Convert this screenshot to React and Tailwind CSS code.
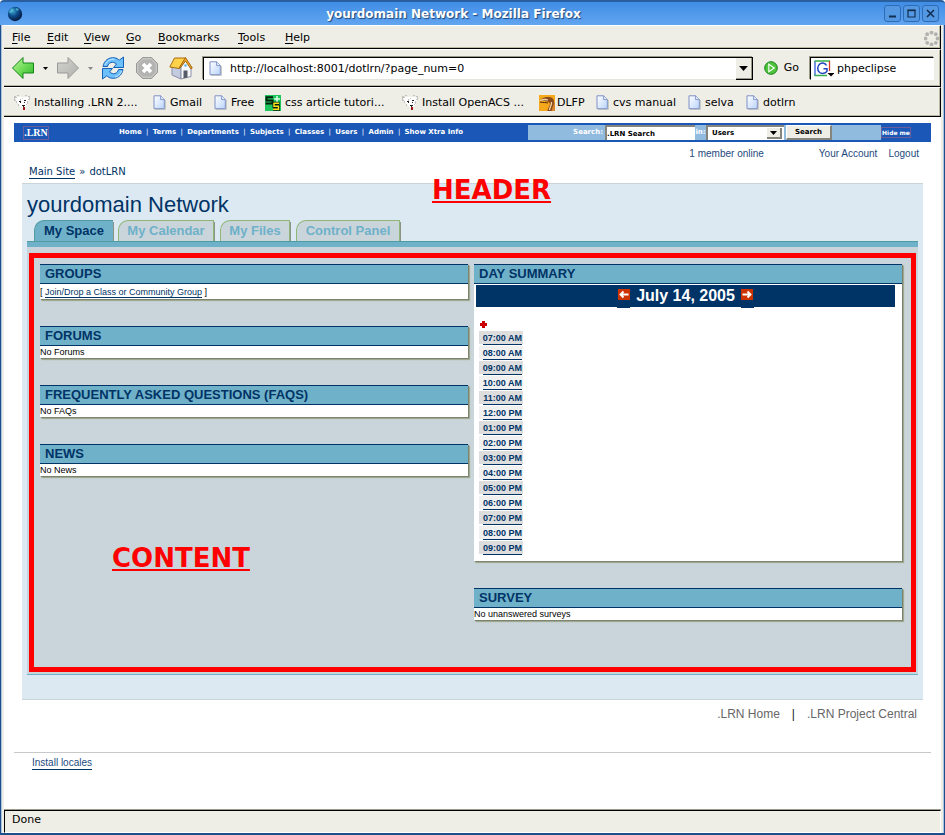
import React from "react";

const sans = "font-['Liberation_Sans',Arial,sans-serif]";
const ui = "font-['DejaVu_Sans',Verdana,sans-serif]";
const bar = "border-t border-r border-b border-t-white border-r-black border-b-black shadow-[inset_-1px_-1px_0_#b9b9a3]";

const menus = [
  { label: "File", width: "w-[35px]" },
  { label: "Edit", width: "w-[37px]" },
  { label: "View", width: "w-[42px]" },
  { label: "Go", width: "w-8" },
  { label: "Bookmarks", width: "w-20" },
  { label: "Tools", width: "w-[47px]" },
  { label: "Help", width: "w-9" },
];

const siteLinks = ["Home", "Terms", "Departments", "Subjects", "Classes", "Users", "Admin", "Show Xtra Info"];

const hours = [
  "07:00 AM", "08:00 AM", "09:00 AM", "10:00 AM", "11:00 AM",
  "12:00 PM", "01:00 PM", "02:00 PM", "03:00 PM", "04:00 PM",
  "05:00 PM", "06:00 PM", "07:00 PM", "08:00 PM", "09:00 PM",
];

function PageIcon() {
  return (
    <svg width="13" height="15" viewBox="0 0 13 15" className="shrink-0" aria-hidden="true">
      <defs>
        <linearGradient id="sheet" x1="0" y1="0" x2="1" y2="1">
          <stop offset="0" stopColor="#ffffff" />
          <stop offset="1" stopColor="#b9d4fb" />
        </linearGradient>
      </defs>
      <path d="M2 14.5h10.5V5" fill="none" stroke="#c9c9c4" />
      <path d="M1 .8h6.8l3.5 3.6v9.3H1z" fill="url(#sheet)" stroke="#7f90c4" />
      <path d="M7.6.8v3.8h3.7" fill="#e3edfd" stroke="#7f90c4" strokeWidth=".9" />
    </svg>
  );
}

function GnuIcon() {
  return (
    <svg width="16" height="16" viewBox="0 0 16 16" className="shrink-0" shapeRendering="crispEdges" aria-hidden="true">
      <path d="M3 2h10l2 2-1 5-2 2-1 2H8l-2-3-3-2-1-4z" fill="#fff" />
      <path d="M0 1h2v1h1v1H1v2h1v1H0zM3 0h2v1H3zM14 1h2v4h-2V4h1V2h-1zM11 0h2v1h-2zM2 6h1v2H2zM13 6h1v3h-1zM4 9h1v2H4zM12 9h1v1h-1zM6 4h1v2H6zM8 3h1v1H8z" fill="#c2c2c2" />
      <path d="M5 6h2v1H5zM10 5h2v1h-2zM6 7h1v1H6zM10 7h1v1h-1zM8 10h3v1H8zM9 11h1v1H9z" fill="#222" />
      <path d="M9 12h2v3H9z" fill="#a01818" />
    </svg>
  );
}

function CssIcon() {
  return (
    <svg width="16" height="16" viewBox="0 0 16 16" className="shrink-0" aria-hidden="true">
      <path d="M0 0h16v16H0z" fill="#1fc45a" />
      <path d="M12 1v6M9 4h6" stroke="#d8ffe4" strokeWidth="1.6" />
      <path d="M8 2.200H1.500v3.200h6v3.200H.5" fill="none" stroke="#04230f" strokeWidth="2" />
      <path d="M14.500 8.300H9v3h4.500v3H8" fill="none" stroke="#04230f" strokeWidth="3" />
      <path d="M14 8.300H9v3h4.500v3H8" fill="none" stroke="#ffe21a" strokeWidth="1.400" />
    </svg>
  );
}

function DlfpIcon() {
  return (
    <svg width="16" height="16" viewBox="0 0 16 16" className="shrink-0" aria-hidden="true">
      <path d="M0 0h16v16H0z" fill="#f5a81c" />
      <path d="M11 8h5v8H8z" fill="#d9852c" />
      <path d="M1 5.500C3 3 6 1.500 10 2c4 .500 5.500 3 5 6-.3 2.500-2 4-2.500 8H8.500c.5-3 3-5 2.500-7.500C10 6 5 6 1 5.500z" fill="#8a4a1c" />
      <path d="M1 5.500c3-1 6-1.300 8-.500M12.500 7c.5 3-1.500 4-2 8" stroke="#f0d6a4" strokeWidth="1.300" fill="none" />
      <path d="M1 7c3 .500 6 .500 8 1" stroke="#4a2008" fill="none" />
    </svg>
  );
}

const bookmarks = [
  { label: "Installing .LRN 2....", icon: <GnuIcon />, width: "w-[139px]", gap: "gap-1" },
  { label: "Gmail", icon: <PageIcon />, width: "w-[61px]", gap: "gap-1" },
  { label: "Free", icon: <PageIcon />, width: "w-[51px]", gap: "gap-1" },
  { label: "css article tutori...", icon: <CssIcon />, width: "w-[137px]", gap: "gap-1" },
  { label: "Install OpenACS ...", icon: <GnuIcon />, width: "w-[137px]", gap: "gap-1" },
  { label: "DLFP", icon: <DlfpIcon />, width: "w-[57px]", gap: "gap-0.5" },
  { label: "cvs manual", icon: <PageIcon />, width: "w-[92px]", gap: "gap-1" },
  { label: "selva", icon: <PageIcon />, width: "w-[58px]", gap: "gap-1" },
  { label: "dotlrn", icon: <PageIcon />, width: "w-[60px]", gap: "gap-1" },
];

function Caret({ className }) {
  return (
    <svg width="7" height="4" viewBox="0 0 7 4" className={className} aria-hidden="true">
      <path d="M0 0h7L3.5 4z" fill="currentColor" />
    </svg>
  );
}

function ArrowIcon({ forward }) {
  return (
    <svg width="24" height="24" viewBox="0 0 24 24" aria-hidden="true">
      <defs>
        <linearGradient id="go-green" x1="0" y1="0" x2="1" y2="1">
          <stop offset="0" stopColor="#c4f5a0" />
          <stop offset=".5" stopColor="#6fdc58" />
          <stop offset="1" stopColor="#2fb52a" />
        </linearGradient>
        <linearGradient id="go-grey" x1="0" y1="0" x2="1" y2="1">
          <stop offset="0" stopColor="#d3d3d0" />
          <stop offset="1" stopColor="#b0b0ad" />
        </linearGradient>
      </defs>
      <path
        d={forward ? "M22.500 12 12 1.500V7H1.500v10H12v5.500z" : "M1.500 12 12 1.500V7h10.500v10H12v5.500z"}
        fill={forward ? "url(#go-grey)" : "url(#go-green)"}
        stroke={forward ? "#999" : "#14861a"}
        strokeLinejoin="round"
      />
    </svg>
  );
}

function ReloadIcon() {
  return (
    <svg width="24" height="24" viewBox="0 0 24 24" aria-hidden="true">
      <g fill="#6cc0fb" stroke="#1560b8" strokeLinejoin="round">
        <path d="M2 10.500C3 4.500 8 1 13.500 1.800c2 .3 3.500 1.200 4.700 2.400L22.500 1v10.500H12.500L15.500 8C12 5 7.500 6 6.500 10.500z" />
        <path d="M22 13.500c-1 6-6 9.500-11.500 8.700-2-.3-3.500-1.200-4.700-2.400L1.500 23V12.500h10L8.500 16c3.500 3 8 2 9-2.500z" />
      </g>
      <path d="M4 9c1.500-4 5.500-6.300 9.500-5.800M14 21c3-.5 5.500-2.500 6.500-6" stroke="#c9eaff" fill="none" />
    </svg>
  );
}

function StopIcon() {
  return (
    <svg width="24" height="24" viewBox="0 0 24 24" aria-hidden="true">
      <path d="M7.500 1.500h9l6 6v9l-6 6h-9l-6-6v-9z" fill="#b3b3b1" stroke="#999" />
      <path d="M7.800 2.800h8.400l5 5v8.400l-5 5H7.800l-5-5V7.800z" fill="none" stroke="#cfcfcd" />
      <path d="m8 8 8 8m0-8-8 8" stroke="#fff" strokeWidth="3.600" />
    </svg>
  );
}

function HomeIcon() {
  return (
    <svg width="24" height="24" viewBox="0 0 24 24" aria-hidden="true">
      <path d="M3 11v8l9 4V10z" fill="#c3cbe0" stroke="#8a8fa8" />
      <path d="M12 23V10l5-5 5 7v8.500z" fill="#f6f7fb" stroke="#8a8fa8" />
      <path d="M14.500 22.300v-7.800h4v6.900z" fill="#555a68" />
      <path d="M5.500 2h11L10 12.500.8 11z" fill="#ffd24a" stroke="#a86a10" strokeLinejoin="round" />
      <path d="M16.500 1.500 23.300 12 22 13l-5.500-8L12 11l-2 1.500z" fill="#f3a82a" stroke="#a86a10" strokeLinejoin="round" />
      <circle cx="16.500" cy="9.500" r="1.300" fill="#5fb6ee" />
    </svg>
  );
}

function TitleBar() {
  const box = "flex size-[17px] items-center justify-center rounded-[3px] border border-[#2c6cb5] bg-[#5498e4] text-[#122f52]";
  return (
    <header className="flex h-[25px] items-center rounded-t border-t-2 border-[#2a5f9e] bg-linear-to-b from-[#3f8de6] to-[#62a5f0] pr-1.5 pl-[7px]">
      <svg width="16" height="16" viewBox="0 0 16 16" aria-hidden="true">
        <defs>
          <radialGradient id="globe" cx=".35" cy=".3" r=".8">
            <stop offset="0" stopColor="#3fa6cf" />
            <stop offset=".45" stopColor="#0c4a8a" />
            <stop offset="1" stopColor="#02102e" />
          </radialGradient>
        </defs>
        <circle cx="8" cy="8" r="7.200" fill="url(#globe)" />
        <path d="M4 3c2-1 3 0 2 2S3 8 2 6zM9 2l3 1-1 2-2-1z" fill="#56bfd8" opacity=".75" />
      </svg>
      <h1 className={`${ui} flex-1 text-center text-[12px] font-bold text-white [text-shadow:1px_1px_1px_#1d4478]`}>
        yourdomain Network - Mozilla Firefox
      </h1>
      <div className="flex gap-0.5">
        <button aria-label="Minimize" className={box}>
          <svg width="9" height="9" viewBox="0 0 9 9"><path d="M1 7.500h7" stroke="currentColor" strokeWidth="2" /></svg>
        </button>
        <button aria-label="Maximize" className={box}>
          <svg width="9" height="9" viewBox="0 0 9 9"><path d="M1 1.500h7v6.500H1z" fill="none" stroke="currentColor" strokeWidth="1.200" /><path d="M.5 1.300h8" stroke="currentColor" strokeWidth="1.800" /></svg>
        </button>
        <button aria-label="Close" className={box}>
          <svg width="9" height="9" viewBox="0 0 9 9"><path d="m1 1 7 7m0-7L1 8" stroke="currentColor" strokeWidth="1.600" /></svg>
        </button>
      </div>
    </header>
  );
}

function MenuBar() {
  const dots = [[7.5, 1.5], [11.8, 3.2], [13.5, 7.5], [11.8, 11.8], [7.5, 13.5], [3.2, 11.8], [1.5, 7.5], [3.2, 3.2]];
  return (
    <nav className={`flex h-6 items-center justify-between pt-0.5 pr-px pl-2 text-[11px] leading-4 ${bar}`}>
      <div className="flex">
        {menus.map((m) => (
          <button key={m.label} className={`text-left ${m.width}`}>
            <span className="underline underline-offset-2">{m.label[0]}</span>
            {m.label.slice(1)}
          </button>
        ))}
      </div>
      <svg width="15" height="15" viewBox="0 0 15 15" aria-hidden="true">
        {dots.map(([x, y]) => (
          <circle key={`${x}-${y}`} cx={x} cy={y} r="1.900" fill="#b2b2ae" />
        ))}
      </svg>
    </nav>
  );
}

function NavBar() {
  return (
    <div className={`flex h-[38px] items-center pr-1.5 pl-[7px] text-[11px] leading-4 ${bar}`}>
      <button aria-label="Back"><ArrowIcon /></button>
      <button aria-label="Back history" className="ml-2 flex h-6 items-center"><Caret className="h-[3px] w-[5px]" /></button>
      <button aria-label="Forward" className="ml-2"><ArrowIcon forward /></button>
      <button aria-label="Forward history" className="ml-2 flex h-6 items-center text-[#888]"><Caret className="h-[3px] w-[5px]" /></button>
      <button aria-label="Reload" className="ml-2"><ReloadIcon /></button>
      <button aria-label="Stop" className="ml-2.5"><StopIcon /></button>
      <button aria-label="Home" className="ml-2.5"><HomeIcon /></button>
      <div className="ml-2.5 flex h-[23px] flex-1 border-t border-l border-black bg-white shadow-[-1px_-1px_0_#9a9a88]">
        <div className="flex flex-1 items-center gap-2 border-b border-[#e5e5df] pt-px pl-[5px]">
          <PageIcon />
          <input aria-label="Address" defaultValue="http://localhost:8001/dotlrn/?page_num=0" className="min-w-0 flex-1 bg-transparent outline-none" />
        </div>
        <button aria-label="Address history" className="flex w-[17px] items-center justify-center border-r border-b border-black bg-[#eeede6] shadow-[inset_-1px_-1px_0_#9a9a88]">
          <Caret className="h-[5px] w-[9px]" />
        </button>
      </div>
      <button className="ml-[11px] flex items-center gap-1.5">
        <svg width="14" height="14" viewBox="0 0 14 14" aria-hidden="true">
          <circle cx="7" cy="7" r="6.300" fill="#4fc43c" stroke="#17801a" />
          <path d="M4.800 3.200 10.300 7l-5.500 3.800z" fill="#4fc43c" stroke="#fff" strokeWidth="1.100" />
        </svg>
        Go
      </button>
      <div className="ml-[11px] flex h-[23px] w-[124px] items-center gap-[3px] border-t border-r border-b border-l border-t-black border-r-white border-b-white border-l-black bg-white pl-[3px] shadow-[-1px_-1px_0_#9a9a88]">
        <svg width="20" height="17" viewBox="0 0 20 17" className="shrink-0" aria-hidden="true">
          <path d="M1 16V1" stroke="#2a5fd8" strokeWidth="1.300" />
          <path d="M.5 1H16M.5 15.500H13" stroke="#35b04a" strokeWidth="1.300" />
          <path d="M15.500 1v10" stroke="#d83a2a" strokeWidth="1.300" />
          <path d="M12.500 5.500C11.500 3 8.500 2.300 6 3.800 3 5.800 3 10.500 5.600 12.500c2.400 1.700 6 1 7.400-1.300V8.800H9.500" fill="none" stroke="#2244c0" strokeWidth="1.500" />
          <path d="M13.500 13h7L17 16.500z" />
        </svg>
        <input aria-label="Web search" defaultValue="phpeclipse" className="min-w-0 flex-1 bg-transparent pt-px outline-none" />
      </div>
    </div>
  );
}

function BookmarkBar() {
  return (
    <div className={`flex h-[30px] items-center pt-px pl-2.5 text-[11px] leading-4 ${bar}`}>
      {bookmarks.map((b) => (
        <a key={b.label} href="#" className={`flex shrink-0 items-center whitespace-nowrap ${b.width} ${b.gap}`}>
          {b.icon}
          {b.label}
        </a>
      ))}
    </div>
  );
}

function SiteBar() {
  return (
    <div className="mx-2.5 mt-1.5 flex h-[19px] items-center bg-[#1a57b7] text-[7px] leading-none font-bold text-white">
      <a href="#" className="ml-[9px] flex h-3.5 w-[26px] items-center justify-center border border-[#6a5f9c] font-['Liberation_Serif','Times_New_Roman',serif] text-[10px]">
        .LRN
      </a>
      <nav className="ml-[70px] flex flex-1 whitespace-nowrap">
        {siteLinks.map((l, i) => (
          <React.Fragment key={l}>
            {i > 0 && <span className="w-[11px] text-center font-normal">|</span>}
            <a href="#">{l}</a>
          </React.Fragment>
        ))}
      </nav>
      <form className="flex h-[15px] w-[353px] items-center bg-[#91badf]" onSubmit={(e) => e.preventDefault()}>
        <label htmlFor="site-query" className="w-[77px] pr-0.5 text-right">Search:</label>
        <input id="site-query" defaultValue=".LRN Search" className="h-[15px] w-[90px] border-t-2 border-l-2 border-[#85857d] bg-white text-black outline-none" />
        <label htmlFor="site-scope" className="w-[11px] text-center">in:</label>
        <div className="relative h-[15px] w-[78px]">
          <select id="site-scope" className="h-full w-full appearance-none border-t-2 border-l-2 border-[#85857d] bg-white pl-1 font-bold text-black outline-none">
            <option>Users</option>
          </select>
          <span className="pointer-events-none absolute top-[3px] right-0.5 flex h-[11px] w-[15px] items-center justify-center border-r-2 border-b-2 border-[#85857d] bg-[#eeede6] text-black">
            <Caret />
          </span>
        </div>
        <button className="ml-0.5 h-[15px] w-[46px] border-t border-r-2 border-b-2 border-l border-t-white border-r-[#85857d] border-b-[#85857d] border-l-white bg-[#eeede6] text-black">
          Search
        </button>
      </form>
      <a href="#" className="mr-5 flex h-[11px] w-[30px] items-center justify-center border border-[#6a5f9c] text-[6px] whitespace-nowrap">
        Hide me
      </a>
    </div>
  );
}

function Tab({ label, active, width }) {
  return (
    <a
      href="#"
      className={`flex h-[21px] items-center justify-center rounded-tl-[10px] border-t border-l text-[13px] font-bold whitespace-nowrap shadow-[1px_2px_0_#8a9484] ${width} ${
        active
          ? "border-[#509ba0] bg-[#6fb1c9] text-[#003366]"
          : "border-r border-[#8fb878] bg-[#c9d5db] text-[#6fb1c9]"
      }`}
    >
      {label}
    </a>
  );
}

function Portlet({ title, children, className = "" }) {
  return (
    <section className="bg-white shadow-[1px_1px_1px_#7b846f,2px_2px_1px_#a9b098]">
      <h3 className="h-5 border-t border-b border-[#003366] bg-[#6fb1c9] pl-[5px] text-[13px] leading-[18px] font-bold text-[#003366]">
        {title}
      </h3>
      <div className={`text-[9px] leading-3 text-black ${className}`}>{children}</div>
    </section>
  );
}

function DayArrow({ next }) {
  return (
    <a href="#" aria-label={next ? "Next day" : "Previous day"} className="flex h-[23px] w-[13px] justify-center bg-[#003366] pt-1">
      <svg width="12" height="11" viewBox="0 0 12 11" aria-hidden="true">
        <path d="M0 0h12v11H0z" fill="#cc3300" />
        <path
          d={next ? "M1.500 5.500h8M6.500 2.500l3 3-3 3" : "M10.500 5.500h-8M5.500 2.500l-3 3 3 3"}
          fill="none"
          stroke="#fff"
          strokeWidth="1.900"
        />
      </svg>
    </a>
  );
}

function DaySummary() {
  return (
    <Portlet title="DAY SUMMARY" className="pt-px pb-[5px]">
      <div className="mr-[7px] ml-0.5 flex h-[22px] items-start justify-center gap-1.5 bg-[#003366] text-[16px] leading-[22px] font-bold text-white">
        <DayArrow />
        <span>July 14, 2005</span>
        <DayArrow next />
      </div>
      <a href="#" aria-label="Add item" className="mt-3.5 mb-[3px] ml-1.5 block w-2">
        <svg width="7" height="7" viewBox="0 0 7 7" aria-hidden="true">
          <path d="M2 0h3v2h2v3H5v2H2V5H0V2h2z" fill="#cc0000" />
        </svg>
      </a>
      <table className="ml-[5px] border-collapse font-bold">
        <tbody>
          {hours.map((h, i) => (
            <tr key={h} className="h-[15px]">
              <td className="h-[15px] w-11 p-0 align-top">
                <div className={`flex h-[13px] justify-end px-px ${i % 2 ? "bg-[#f0f0f0]" : "bg-[#dddddd]"}`}>
                  <a href="#" className="h-3.5 border-b border-[#003366] leading-[15px] whitespace-nowrap text-[#003366]">{h}</a>
                </div>
              </td>
            </tr>
          ))}
        </tbody>
      </table>
    </Portlet>
  );
}

function Portal() {
  return (
    <main className="relative mx-[18px] border-t border-b border-[#c9d5db] bg-[#dce9f2] px-[5px] pt-[7px] pb-6">
      <span className={`${ui} absolute top-[-9px] left-[410px] text-[26px] leading-[30px] font-bold text-[#ff0000] underline decoration-2 underline-offset-2`}>
        HEADER
      </span>
      <h2 className="text-[22px] leading-7 text-[#003366]">yourdomain Network</h2>
      <nav className="mt-px flex pl-[7px]">
        <Tab label="My Space" active width="w-[79px]" />
        <div className="ml-[5px] flex gap-1.5">
          <Tab label="My Calendar" width="w-[96px]" />
          <Tab label="My Files" width="w-[70px]" />
          <Tab label="Control Panel" width="w-[104px]" />
        </div>
      </nav>
      <div className="relative h-1.5 border-t border-[#509ba0] bg-[#6fb1c9]" />
      <div className="border-b border-[#6fb1c9] bg-[#c9d5db] px-0.5 pt-1.5 pb-0.5">
        <div className="relative grid grid-cols-2 gap-1.5 border-[5px] border-[#ff0000] pt-1.5 pr-[9px] pb-[47px] pl-1.5">
          <div className="flex flex-col gap-[27px]">
            <Portlet title="GROUPS" className="h-[15px] pt-0.5">
              [ <a href="#" className="inline-block h-3 border-b border-[#003366] text-[#003366]">Join/Drop a Class or Community Group</a> ]
            </Portlet>
            <Portlet title="FORUMS" className="h-3">No Forums</Portlet>
            <Portlet title="FREQUENTLY ASKED QUESTIONS (FAQS)" className="h-3">No FAQs</Portlet>
            <Portlet title="NEWS" className="h-3">No News</Portlet>
          </div>
          <div className="flex flex-col gap-[27px]">
            <DaySummary />
            <Portlet title="SURVEY" className="h-3">No unanswered surveys</Portlet>
          </div>
          <span className={`${ui} absolute top-[285px] left-[78px] text-[26px] leading-[30px] font-bold text-[#ff0000] underline decoration-2 underline-offset-2`}>
            CONTENT
          </span>
        </div>
      </div>
    </main>
  );
}

export default function App() {
  return (
    <div className={`${ui} flex min-h-screen flex-col bg-white text-black`}>
      <TitleBar />
      <div className="flex flex-1 flex-col border-x border-b-2 border-[#1f4f8a] bg-[#a9c4e2] px-px">
        <div className="flex flex-1 flex-col bg-[#eeede6] px-0.5">
          <MenuBar />
          <NavBar />
          <BookmarkBar />
          <div className={`${sans} flex flex-1 flex-col bg-white`}>
            <div className={ui}><SiteBar /></div>
            <div className="flex h-[22px] items-center justify-end gap-[11px] pr-[22px] text-[10px] text-[#1d4a7d]">
              <span className="mr-11">1 member online</span>
              <a href="#">Your Account</a>
              <a href="#">Logout</a>
            </div>
            <div className={`${ui} flex h-[19px] items-start gap-1 pt-px pl-[25px] text-[10px] leading-[13px] text-[#003366]`}>
              <a href="#" className="border-b border-[#003366]">Main Site</a>
              <span>»</span>
              <span>dotLRN</span>
            </div>
            <Portal />
            <footer>
              <div className="flex h-[52px] items-start justify-end gap-3 pt-1.5 pr-6 text-[12px] leading-4 text-[#666]">
                <a href="#">.LRN Home</a>
                <span className="text-[#222]">|</span>
                <a href="#">.LRN Project Central</a>
              </div>
              <div className="mx-2.5 border-t border-[#c8c8c8] pt-1 pl-[18px] text-[10px] leading-3">
                <a href="#" className="inline-block border-b border-[#003366] text-[#1d4a7d]">Install locales</a>
              </div>
            </footer>
          </div>
          <div className="border-t border-[#9a9a88]">
            <div className="h-[23px] border border-t-black border-r-white border-b-white border-l-black pl-[7px] text-[11px] leading-[18px]">Done</div>
          </div>
        </div>
      </div>
    </div>
  );
}
